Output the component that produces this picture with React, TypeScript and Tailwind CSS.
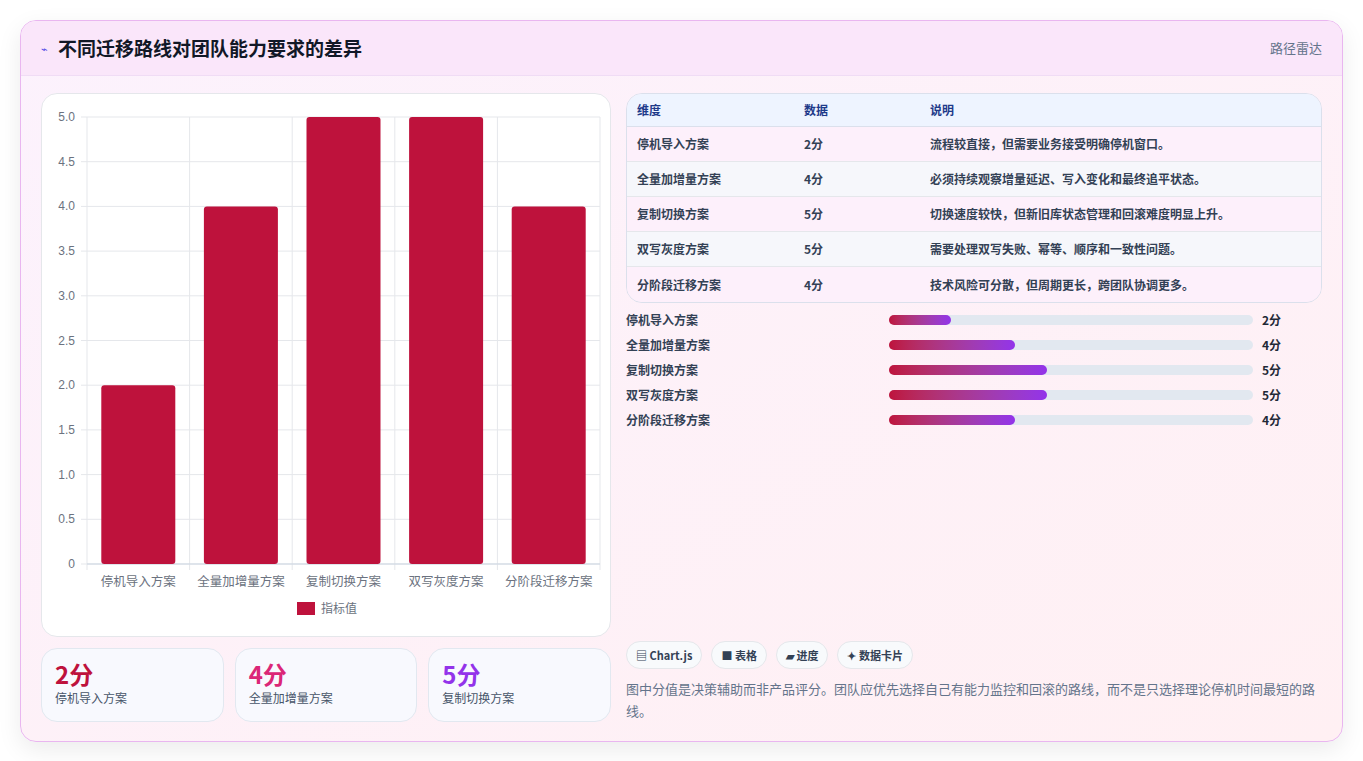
import React from "react";

const rows = [
  { name: "停机导入方案", score: 2, note: "流程较直接，但需要业务接受明确停机窗口。", pct: 17 },
  { name: "全量加增量方案", score: 4, note: "必须持续观察增量延迟、写入变化和最终追平状态。", pct: 34.6 },
  { name: "复制切换方案", score: 5, note: "切换速度较快，但新旧库状态管理和回滚难度明显上升。", pct: 43.4 },
  { name: "双写灰度方案", score: 5, note: "需要处理双写失败、幂等、顺序和一致性问题。", pct: 43.4 },
  { name: "分阶段迁移方案", score: 4, note: "技术风险可分散，但周期更长，跨团队协调更多。", pct: 34.6 },
];

const font = { fontFamily: '"Noto Sans CJK SC", "Noto Sans", sans-serif' };

function BarChart() {
  // plot area in svg coords: panel origin at (40,92)
  const x0 = 45, x1 = 558, yTop = 23, yBot = 470;
  const ticks = [5, 4.5, 4, 3.5, 3, 2.5, 2, 1.5, 1, 0.5, 0];
  const slot = (x1 - x0) / 5;
  return (
    <svg width="570" height="544" className="block">
      {ticks.map((t) => {
        const y = yBot - (t / 5) * (yBot - yTop);
        return (
          <g key={t}>
            <line x1={x0 - 6} x2={x1} y1={y} y2={y} stroke="#e5e7eb" />
            <text x={x0 - 12} y={y + 4} textAnchor="end" fontSize="12" fill="#6b7280" fontFamily="Liberation Sans, sans-serif">
              {t === 0 ? "0" : t.toFixed(1)}
            </text>
          </g>
        );
      })}
      {[0, 1, 2, 3, 4, 5].map((i) => (
        <line key={i} x1={x0 + i * slot} x2={x0 + i * slot} y1={yTop} y2={yBot + 6} stroke="#e5e7eb" />
      ))}
      <line x1={x0} x2={x1} y1={yBot} y2={yBot} stroke="#cbd5e1" />
      {rows.map((r, i) => {
        const h = (r.score / 5) * (yBot - yTop);
        const cx = x0 + slot * i + slot / 2;
        return (
          <g key={r.name}>
            <rect x={cx - 37} y={yBot - h} width="74" height={h} rx="3" fill="#be123c" />
            <text x={cx} y={yBot + 22} textAnchor="middle" fontSize="12.5" fill="#6b7280" style={font}>
              {r.name}
            </text>
          </g>
        );
      })}
      <rect x="255" y="508" width="18" height="13" fill="#be123c" />
      <text x="279" y="519" fontSize="12" fill="#6b7280" style={font}>指标值</text>
    </svg>
  );
}

export default function App() {
  return (
    <div className="min-h-[761px] bg-white px-5 pt-5 pb-5" style={font}>
      <div className="overflow-hidden rounded-2xl border border-[#e9b6f0] bg-gradient-to-br from-[#fcf2fd] to-[#fff0f3] shadow-[0_8px_24px_rgba(0,0,0,0.08)]">
        <div className="flex h-[55px] items-center justify-between border-b border-[#f0dcf5] bg-[#fae6fa] px-5">
          <div className="flex items-center gap-2.5">
            <span className="text-[11px] text-[#4f46e5]">⌁</span>
            <h1 className="text-[19px] font-bold text-[#111827]">不同迁移路线对团队能力要求的差异</h1>
          </div>
          <span className="text-[13px] text-[#64748b]">路径雷达</span>
        </div>
        <div className="flex gap-[15px] px-5 pt-[17px] pb-[19px]">
          <div className="flex w-[570px] flex-col gap-[11px]">
            <div className="h-[544px] rounded-2xl border border-[#e5e7eb] bg-white">
              <BarChart />
            </div>
            <div className="grid grid-cols-3 gap-[11px]">
              {[
                { v: "2分", c: "text-[#be123c]", n: "停机导入方案" },
                { v: "4分", c: "text-[#db2777]", n: "全量加增量方案" },
                { v: "5分", c: "text-[#9333ea]", n: "复制切换方案" },
              ].map((s) => (
                <div key={s.n} className="h-[74px] rounded-2xl border border-[#e2e8f0] bg-[#f8f9fe] px-[13px] pt-[10px]">
                  <div className={`text-[24px] leading-[30px] font-bold ${s.c}`}>{s.v}</div>
                  <div className="text-[12px] text-[#475569]">{s.n}</div>
                </div>
              ))}
            </div>
          </div>
          <div className="flex flex-1 flex-col justify-between">
            <div>
              <div className="overflow-hidden rounded-2xl border border-[#dbe0ec] text-[12px]">
                <div className="grid h-[33px] grid-cols-[167px_126px_1fr] items-center border-b border-[#dbe0ec] bg-[#eef4ff] px-[10px] font-semibold text-[#1e3a8a]">
                  <span>维度</span><span>数据</span><span>说明</span>
                </div>
                {rows.map((r, i) => (
                  <div
                    key={r.name}
                    className={`grid h-[35px] grid-cols-[167px_126px_1fr] items-center px-[10px] font-semibold text-[#334155] ${i < 4 ? "border-b border-[#e5e7eb]" : ""} ${i % 2 === 0 ? "bg-[#fdf0fb]" : "bg-[#f6f7fb]"}`}
                  >
                    <span>{r.name}</span><span>{r.score}分</span><span>{r.note}</span>
                  </div>
                ))}
              </div>
              <div className="mt-[8px] flex flex-col gap-[7px]">
                {rows.map((r) => (
                  <div key={r.name} className="flex h-[18px] items-center text-[12px] font-semibold text-[#334155]">
                    <span className="w-[263px]">{r.name}</span>
                    <div className="h-[10px] w-[364px] rounded-full bg-[#e2e8f0]">
                      <div className="h-full rounded-full bg-gradient-to-r from-[#be123c] to-[#9333ea]" style={{ width: `${r.pct}%` }} />
                    </div>
                    <span className="ml-[9px] text-[#1f2937]">{r.score}分</span>
                  </div>
                ))}
              </div>
            </div>
            <div>
              <div className="flex gap-[9px] text-[11px] font-semibold text-[#334155]">
                {["▤ Chart.js", "■ 表格", "▰ 进度", "✦ 数据卡片"].map((c) => (
                  <span key={c} className="flex h-[28px] items-center rounded-full border border-[#e5e7eb] bg-[#f8fafc] px-[9px]">{c}</span>
                ))}
              </div>
              <p className="mt-[9px] text-[13px] leading-[22px] text-[#64748b]">
                图中分值是决策辅助而非产品评分。团队应优先选择自己有能力监控和回滚的路线，而不是只选择理论停机时间最短的路线。
              </p>
            </div>
          </div>
        </div>
      </div>
    </div>
  );
}
